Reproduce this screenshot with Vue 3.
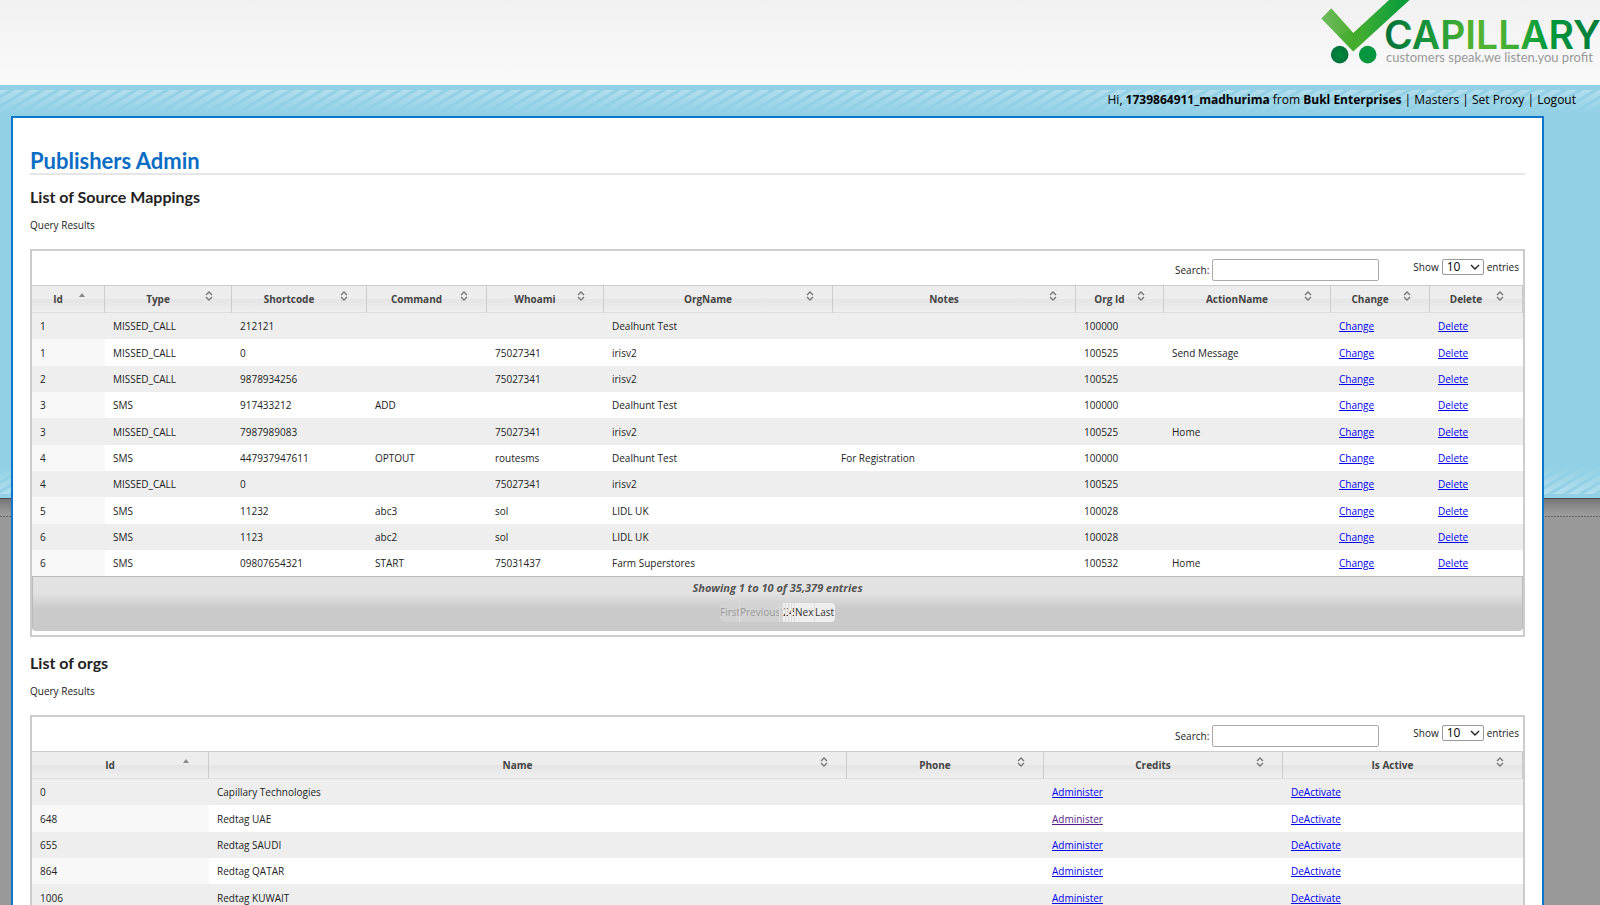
<template>
  <div class="page">
    <header class="header">
      <svg class="logo" width="279" height="66" viewBox="0 0 279 66" role="img" aria-label="Capillary">
        <defs>
          <linearGradient id="check" x1="0" y1="0" x2="1" y2="0">
            <stop offset="0" stop-color="#6fba62" />
            <stop offset="0.35" stop-color="#4fb02f" />
            <stop offset="0.6" stop-color="#2fa836" />
            <stop offset="1" stop-color="#009a3d" />
          </linearGradient>
          <linearGradient id="brand" x1="0" y1="0" x2="1" y2="0">
            <stop offset="0" stop-color="#00703a" />
            <stop offset="0.25" stop-color="#1f9d3a" />
            <stop offset="0.42" stop-color="#56b52f" />
            <stop offset="0.6" stop-color="#3fae33" />
            <stop offset="0.75" stop-color="#009a3d" />
            <stop offset="1" stop-color="#007a3a" />
          </linearGradient>
          <radialGradient id="wheel">
            <stop offset="0" stop-color="#078a3c" />
            <stop offset="1" stop-color="#00713a" />
          </radialGradient>
        </defs>
        <path d="M10.3 8.3 L0.3 18.6 L32.3 51.6 L88.5 0 H68 L32.3 33 Z" fill="url(#check)" />
        <path d="M17.5 36.3 L27 31 L32.3 33 L42 24 L32.3 51.6 Z" fill="#35a52c" opacity="0.35" />
        <circle cx="18.7" cy="54.6" r="8.8" fill="url(#wheel)" />
        <circle cx="46.7" cy="54.6" r="8.8" fill="#069640" />
        <text x="63" y="49" class="logo-name" fill="url(#brand)">CAPILLARY</text>
        <text x="65" y="62" class="logo-tag">customers speak.we listen.you profit</text>
      </svg>
    </header>

    <main class="body">
      <nav class="userbar">
        Hi, <b>1739864911_madhurima</b> from <b>Bukl Enterprises</b> |
        <a href="#">Masters</a> | <a href="#">Set Proxy</a> | <a href="#">Logout</a>
      </nav>

      <div class="panel">
        <h1>Publishers Admin</h1>

        <section v-for="t in tables" :key="t.key">
          <h2>{{ t.title }}</h2>
          <p class="caption">Query Results</p>

          <div class="grid">
            <div class="toolbar">
              <div class="search">
                <label :for="t.key + '-search'">Search:</label>
                <input :id="t.key + '-search'" v-model="t.search" type="text" />
              </div>
              <div class="length">
                <label :for="t.key + '-length'">Show</label>
                <span class="select">
                  <select :id="t.key + '-length'" v-model="t.length">
                    <option v-for="n in [10, 25, 50, 100]" :key="n" :value="n">{{ n }}</option>
                  </select>
                  <svg width="10" height="6" viewBox="0 0 10 6"><path d="M1 1 L5 5 L9 1" /></svg>
                </span>
                <span>entries</span>
              </div>
            </div>

            <table>
              <colgroup>
                <col v-for="c in t.columns" :key="c.name" :style="{ width: c.width + 'px' }" />
              </colgroup>
              <thead>
                <tr>
                  <th v-for="(c, i) in t.columns" :key="c.name" scope="col">
                    <div class="head">
                      <span>{{ c.name }}</span>
                      <svg width="8" height="10" viewBox="0 0 8 10">
                        <path v-if="i === 0" class="asc" d="M1 6 L4 2 L7 6 Z" />
                        <path v-else class="both" d="M1 4 L4 1 L7 4 M1 6 L4 9 L7 6" />
                      </svg>
                    </div>
                  </th>
                </tr>
              </thead>
              <tbody>
                <tr v-for="(row, r) in t.rows" :key="r">
                  <td v-for="(c, i) in t.columns" :key="c.name">
                    <a v-if="c.link" href="#" :class="{ visited: r === t.visited && c.name === 'Credits' }">{{ c.link }}</a>
                    <template v-else>{{ row[i] }}</template>
                  </td>
                </tr>
              </tbody>
            </table>

            <div class="footer">
              <div class="info">Showing 1 to 10 of {{ t.total }} entries</div>
              <div class="pager">
                <button class="wide off" disabled>First</button>
                <button class="prev off" disabled>Previous</button>
                <button class="num off" disabled>1</button>
                <button v-for="n in [2, 3, 4, 5]" :key="n" class="num">{{ n }}</button>
                <button class="wide">Next</button>
                <button class="wide">Last</button>
              </div>
            </div>
          </div>
        </section>
      </div>
    </main>
  </div>
</template>

<script setup>
import { ref } from 'vue'

const tables = ref([
  {
    key: 'mappings',
    title: 'List of Source Mappings',
    search: '',
    length: 10,
    total: '35,379',
    columns: [
      { name: 'Id', width: 73 },
      { name: 'Type', width: 127 },
      { name: 'Shortcode', width: 135 },
      { name: 'Command', width: 120 },
      { name: 'Whoami', width: 117 },
      { name: 'OrgName', width: 229 },
      { name: 'Notes', width: 243 },
      { name: 'Org Id', width: 88 },
      { name: 'ActionName', width: 167 },
      { name: 'Change', width: 99, link: 'Change' },
      { name: 'Delete', width: 93, link: 'Delete' }
    ],
    rows: [
      ['1', 'MISSED_CALL', '212121', '', '', 'Dealhunt Test', '', '100000', ''],
      ['1', 'MISSED_CALL', '0', '', '75027341', 'irisv2', '', '100525', 'Send Message'],
      ['2', 'MISSED_CALL', '9878934256', '', '75027341', 'irisv2', '', '100525', ''],
      ['3', 'SMS', '917433212', 'ADD', '', 'Dealhunt Test', '', '100000', ''],
      ['3', 'MISSED_CALL', '7987989083', '', '75027341', 'irisv2', '', '100525', 'Home'],
      ['4', 'SMS', '447937947611', 'OPTOUT', 'routesms', 'Dealhunt Test', 'For Registration', '100000', ''],
      ['4', 'MISSED_CALL', '0', '', '75027341', 'irisv2', '', '100525', ''],
      ['5', 'SMS', '11232', 'abc3', 'sol', 'LIDL UK', '', '100028', ''],
      ['6', 'SMS', '1123', 'abc2', 'sol', 'LIDL UK', '', '100028', ''],
      ['6', 'SMS', '09807654321', 'START', '75031437', 'Farm Superstores', '', '100532', 'Home']
    ]
  },
  {
    key: 'orgs',
    title: 'List of orgs',
    search: '',
    length: 10,
    total: '5',
    visited: 1,
    columns: [
      { name: 'Id', width: 177 },
      { name: 'Name', width: 638 },
      { name: 'Phone', width: 197 },
      { name: 'Credits', width: 239, link: 'Administer' },
      { name: 'Is Active', width: 240, link: 'DeActivate' }
    ],
    rows: [
      ['0', 'Capillary Technologies', ''],
      ['648', 'Redtag UAE', ''],
      ['655', 'Redtag SAUDI', ''],
      ['864', 'Redtag QATAR', ''],
      ['1006', 'Redtag KUWAIT', '']
    ]
  }
])
</script>

<style>
body {
  margin: 0;
  background: #999;
}
</style>

<style scoped>
.page {
  font-family: "Trebuchet MS", "Open Sans", sans-serif;
  font-size: 10px;
  color: #222;
}
.header {
  display: flex;
  justify-content: flex-end;
  height: 85px;
  background: linear-gradient(#f1f1f1, #fafafa);
}
.logo-name {
  font-family: Inter, sans-serif;
  font-size: 39px;
  font-weight: 600;
}
.logo-tag {
  font-family: "Trebuchet MS", Lato, sans-serif;
  font-size: 13px;
  fill: #999;
}

/* blue band with hatching at both ends, its shadow and a dotted rule below */
.body {
  background:
    linear-gradient(rgba(145, 208, 229, 0), #91d0e5) 0 5px / 100% 24px no-repeat,
    repeating-linear-gradient(149deg, #b2deed 0 4px, #91d0e5 5px 7px, #b2deed 8px) 0 5px / 100% 24px no-repeat,
    linear-gradient(#91d0e5, rgba(145, 208, 229, 0)) 0 381px / 100% 28px no-repeat,
    repeating-linear-gradient(149deg, #b2deed 0 4px, #91d0e5 5px 7px, #b2deed 8px) 0 381px / 100% 28px no-repeat,
    linear-gradient(#91d0e5, #91d0e5) 0 0 / 100% 413px no-repeat,
    linear-gradient(#4c4c4c, #4c4c4c) 0 413px / 100% 1px no-repeat,
    linear-gradient(#777, #999) 0 414px / 100% 14px no-repeat,
    repeating-linear-gradient(90deg, #666 0 2px, #999 2px 3px) 0 431px / 100% 1px no-repeat,
    #999;
}
.userbar {
  padding: 5px 24px 6px;
  font-size: 12px;
  line-height: 20px;
  text-align: right;
  color: #000;
}
.userbar a {
  color: #000;
  text-decoration: none;
}
.panel {
  margin: 0 56px 0 11px;
  padding: 30px 17px 16px;
  border: 2px solid #0b76cc;
  background: #fff;
}
h1,
h2 {
  font-family: "Trebuchet MS", Lato, sans-serif;
}
h1 {
  margin: 0 0 10px;
  border-bottom: 2px solid #e6e6e6;
  font-size: 22px;
  line-height: 25px;
  color: #0a6cc4;
}
h2 {
  margin: 0;
  font-size: 16px;
  line-height: 24px;
  color: #222;
}
.caption {
  margin: 8px 0 16px;
  line-height: 16px;
}
.grid {
  margin-bottom: 14px;
  padding-bottom: 4px;
  border: 2px solid #ccc;
}
.toolbar {
  display: flex;
  justify-content: flex-end;
  align-items: flex-start;
  gap: 34px;
  height: 26px;
  padding: 8px 4px 0;
}
.search,
.length {
  display: flex;
  align-items: center;
  gap: 3px;
}
.search input {
  box-sizing: border-box;
  width: 167px;
  height: 22px;
  padding: 0 4px;
  border: 1px solid #aaa;
  border-radius: 2px;
  background: #fff;
  font: inherit;
}
.select {
  position: relative;
  display: flex;
}
.select select {
  box-sizing: border-box;
  width: 42px;
  height: 16px;
  padding: 0 4px;
  border: 1px solid #999;
  border-radius: 2px;
  background: #fff;
  color: #000;
  font-family: "Trebuchet MS", "Open Sans", sans-serif;
  font-size: 12px;
  line-height: 14px;
  appearance: none;
}
.select svg {
  position: absolute;
  top: 5px;
  right: 4px;
  fill: none;
  stroke: #222;
  stroke-width: 1.4;
  pointer-events: none;
}

table {
  width: 100%;
  table-layout: fixed;
  border-collapse: separate;
  border-spacing: 0;
}
th {
  box-sizing: border-box;
  height: 28px;
  padding: 0 18px 0 6px;
  border-top: 1px solid #ccc;
  border-right: 1px solid #ccc;
  border-bottom: 1px solid #ddd;
  background: linear-gradient(#ededed 50%, #e4e4e4 50%, #efefef);
  color: #444;
}
.head {
  display: flex;
  align-items: flex-start;
  line-height: 16px;
}
.head span {
  flex: 1;
}
.asc {
  fill: #888;
}
.both {
  fill: none;
  stroke: #777;
  stroke-width: 1.4;
}
td {
  height: 26px;
  padding: 0 8px;
  line-height: 16px;
  background: #fff;
}
tr:nth-child(3n + 2) td {
  height: 27px;
}
td:first-child {
  background: #f8f8f8;
}
tbody tr:nth-child(odd) td {
  background: #eee;
}
td a {
  color: #00e;
}
td a.visited {
  color: #551a8b;
}

.footer {
  padding: 3px 0 8px;
  border: 1px solid #bbb;
  border-bottom-color: #ccc;
  border-radius: 0 0 4px 4px;
  background: linear-gradient(#e2e2e2 30%, #cacaca 60%);
}
.info {
  font-size: 11px;
  line-height: 16px;
  text-align: center;
  font-style: italic;
  font-weight: bold;
  color: #555;
}
.pager {
  display: flex;
  justify-content: center;
  margin-top: 7px;
}
.pager button {
  box-sizing: border-box;
  height: 19px;
  padding: 0;
  border: 0;
  border-right: 1px solid #ddd;
  background: #eee;
  color: #333;
  font: inherit;
  line-height: 19px;
  text-align: left;
  overflow: hidden;
}
.pager .off {
  background: #d3d3d3;
  color: #999;
}
.pager .wide {
  width: 20px;
}
.pager .prev {
  width: 40px;
}
.pager .num {
  width: 3px;
}
.pager button:first-child {
  border-radius: 4px 0 0 4px;
}
.pager button:last-child {
  border-right: 0;
  border-radius: 0 4px 4px 0;
}
</style>
